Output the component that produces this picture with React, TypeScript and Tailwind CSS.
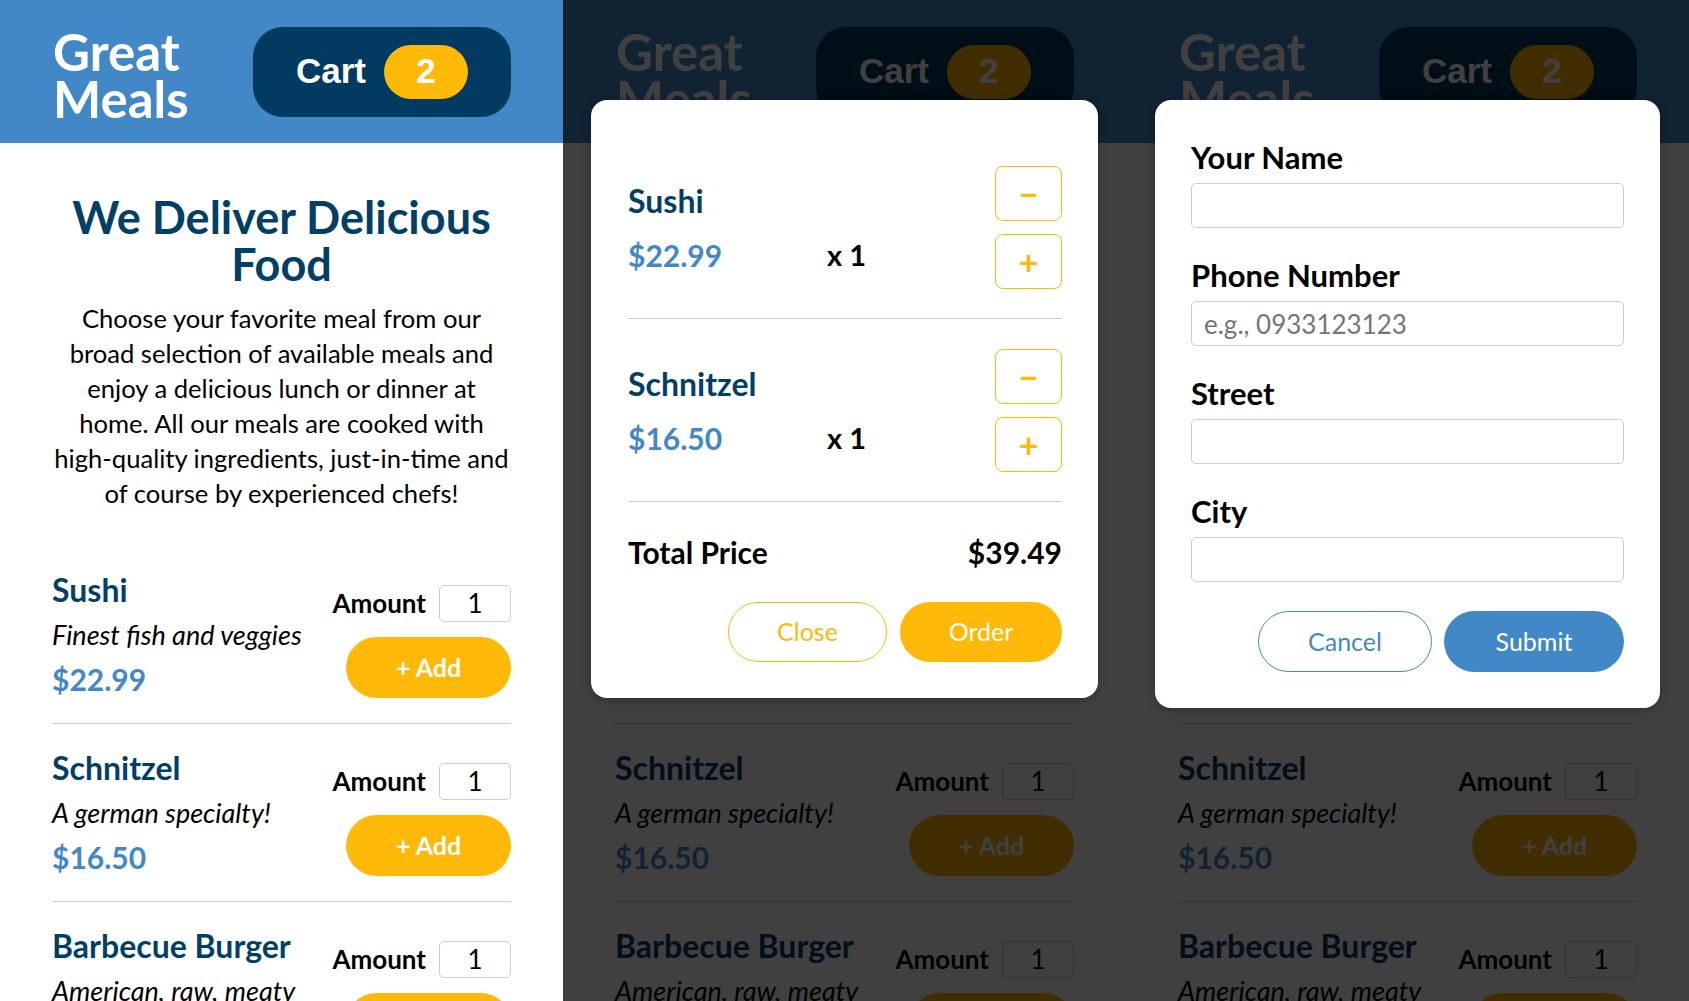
import React from "react";

const meals = [
    { id: "m1", name: "Sushi", description: "Finest fish and veggies", price: 22.99 },
    { id: "m2", name: "Schnitzel", description: "A german specialty!", price: 16.5 },
    { id: "m3", name: "Barbecue Burger", description: "American, raw, meaty", price: 12.99 },
    { id: "m4", name: "Green Bowl", description: "Healthy...and green...", price: 18.99 },
];

const cartItems = [
    { id: "m1", name: "Sushi", price: 22.99, amount: 1 },
    { id: "m2", name: "Schnitzel", price: 16.5, amount: 1 },
];

function Header() {
    return (
        <header className="h-[143px] bg-[#4388c6] flex items-center justify-between pl-[53px] pr-[52px]">
            <h1 className="mt-[6px] text-white text-[51px] leading-[47px] font-bold">
                Great
                <br />
                Meals
            </h1>
            <button className="w-[258px] h-[90px] rounded-[30px] bg-[#013b62] flex items-center pl-[43px] gap-[18px] text-white font-['Liberation_Sans',Arial,sans-serif] font-bold text-[35px]">
                <span>Cart</span>
                <span className="w-[84px] h-[54px] rounded-full bg-[#ffb908] flex items-center justify-center">2</span>
            </button>
        </header>
    );
}

function MealItem({ meal }: { meal: (typeof meals)[number] }) {
    return (
        <li className="flex justify-between border-b border-[#ccc] py-[24px]">
            <div>
                <h3 className="text-[32px] leading-[40px] font-bold text-[#023f66]">{meal.name}</h3>
                <div className="mt-[5px] text-[27px] leading-[40px] italic text-black">{meal.description}</div>
                <div className="mt-[4px] text-[30px] leading-[40px] font-bold text-[#4388c6]">${meal.price.toFixed(2)}</div>
            </div>
            <form className="flex flex-col items-end">
                <div className="mt-[14px] flex items-center gap-[13px]">
                    <label className="text-[26px] font-bold text-black">Amount</label>
                    <input
                        readOnly
                        value="1"
                        className="w-[72px] h-[37px] rounded-[5px] border border-[#ccc] text-center text-[26px] bg-white text-black"
                    />
                </div>
                <button
                    type="button"
                    className="mt-[14px] w-[165px] h-[61px] rounded-full bg-[#ffb908] text-white text-[25px] font-bold"
                >
                    + Add
                </button>
            </form>
        </li>
    );
}

function MealsPage() {
    return (
        <div className="bg-white">
            <Header />
            <section className="mx-auto w-[480px] mt-[51px] text-center">
                <h2 className="text-[45px] leading-[47px] font-bold text-[#023f66]">
                    We Deliver Delicious
                    <br />
                    Food
                </h2>
                <p className="mt-[13px] text-[25.6px] leading-[35px] text-black">
                    Choose your favorite meal from our
                    <br />
                    broad selection of available meals and
                    <br />
                    enjoy a delicious lunch or dinner at
                    <br />
                    home. All our meals are cooked with
                    <br />
                    high-quality ingredients, just-in-time and
                    <br />
                    of course by experienced chefs!
                </p>
            </section>
            <ul className="mt-[35px] mx-[52px]">
                {meals.map((meal) => (
                    <MealItem key={meal.id} meal={meal} />
                ))}
            </ul>
        </div>
    );
}

function CartModal() {
    const total = cartItems.reduce((sum, item) => sum + item.price * item.amount, 0);
    return (
        <div className="absolute left-[28px] top-[100px] w-[507px] bg-white rounded-[16px] pl-[37px] pr-[36px] py-[36px] shadow-[0_2px_8px_rgba(0,0,0,0.25)]">
            <ul>
                {cartItems.map((item) => (
                    <li key={item.id} className="flex items-center justify-between border-b border-[#ccc] pt-[30px] pb-[29px]">
                        <div>
                            <h2 className="text-[32px] leading-[40px] font-bold text-[#023f66]">{item.name}</h2>
                            <div className="mt-[14px] flex items-center leading-[40px]">
                                <span className="w-[199px] text-[30px] font-bold text-[#4388c6]">${item.price.toFixed(2)}</span>
                                <span className="text-[29px] font-bold text-black">x {item.amount}</span>
                            </div>
                        </div>
                        <div className="flex flex-col gap-[13px]">
                            <button className="w-[67px] h-[55px] rounded-[8px] border border-[#ffb908] bg-white text-[#ffb908] text-[34px] font-bold flex items-center justify-center">
                                −
                            </button>
                            <button className="w-[67px] h-[55px] rounded-[8px] border border-[#ffb908] bg-white text-[#ffb908] text-[34px] font-bold flex items-center justify-center">
                                +
                            </button>
                        </div>
                    </li>
                ))}
            </ul>
            <div className="mt-[30px] flex justify-between text-[30px] leading-[40px] font-bold text-black">
                <span>Total Price</span>
                <span>${total.toFixed(2)}</span>
            </div>
            <div className="mt-[30px] flex justify-end gap-[13px]">
                <button className="w-[159px] h-[60px] rounded-full border border-[#ffb908] bg-white text-[#ffb908] text-[25px]">
                    Close
                </button>
                <button className="w-[162px] h-[60px] rounded-full bg-[#ffb908] text-white text-[25px]">Order</button>
            </div>
        </div>
    );
}

function Field({ label, placeholder, first }: { label: string; placeholder?: string; first?: boolean }) {
    return (
        <div className={first ? "" : "mt-[27px]"}>
            <label className="block text-[31px] leading-[40px] font-bold text-black">{label}</label>
            <input
                readOnly
                placeholder={placeholder}
                className="mt-[6px] block w-full h-[45px] rounded-[5px] border border-[#ccc] px-[12px] text-[26px] bg-white placeholder:text-[#757575]"
            />
        </div>
    );
}

function CheckoutModal() {
    return (
        <div className="absolute left-[29px] top-[100px] w-[505px] bg-white rounded-[16px] px-[36px] pt-[37px] pb-[36px] shadow-[0_2px_8px_rgba(0,0,0,0.25)]">
            <Field label="Your Name" first />
            <Field label="Phone Number" placeholder="e.g., 0933123123" />
            <Field label="Street" />
            <Field label="City" />
            <div className="mt-[29px] flex justify-end gap-[12px]">
                <button className="w-[174px] h-[61px] rounded-full border border-[#4388c6] bg-white text-[#4388c6] text-[25px]">
                    Cancel
                </button>
                <button className="w-[180px] h-[61px] rounded-full bg-[#4388c6] text-white text-[25px]">Submit</button>
            </div>
        </div>
    );
}

function Panel({ children }: { children?: React.ReactNode }) {
    return (
        <div className="relative w-[563px] h-[1001px] overflow-hidden">
            <MealsPage />
            {children && (
                <>
                    <div className="absolute inset-0 bg-[rgba(0,0,0,0.75)]" />
                    {children}
                </>
            )}
        </div>
    );
}

export default function App() {
    return (
        <div className="flex w-[1689px] h-[1001px] overflow-hidden font-['Lato','Noto_Sans',sans-serif]">
            <Panel />
            <Panel>
                <CartModal />
            </Panel>
            <Panel>
                <CheckoutModal />
            </Panel>
        </div>
    );
}
